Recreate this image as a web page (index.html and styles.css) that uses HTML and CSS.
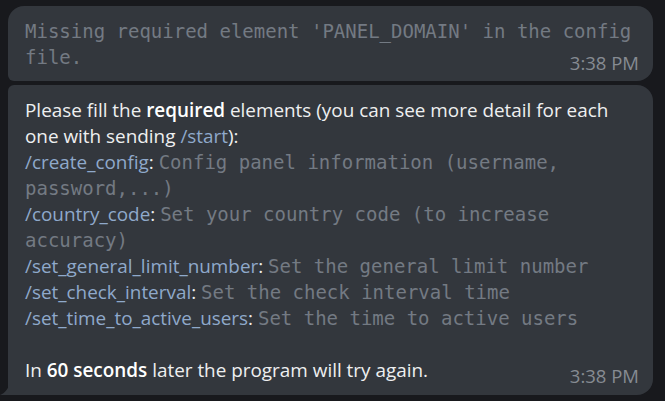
FILE: index.html
```html
<!DOCTYPE html>
<html>
<head>
<meta charset="utf-8">
<link rel="stylesheet" href="styles.css">
</head>
<body>
<div class="chat">
  <div class="bubble first">
    <div class="text mono-msg">Missing required element 'PANEL_DOMAIN' in the config file.</div>
    <div class="time">3:38 PM</div>
  </div>
  <div class="bubble last">
    <div class="text">Please fill the <b>required</b> elements (you can see more detail for each one with sending <span class="cmd">/start</span>):<br><span class="cmd">/create_config</span>: <span class="mono">Config panel information (username, password,...)</span><br><span class="cmd">/country_code</span>: <span class="mono">Set your country code (to increase accuracy)</span><br><span class="cmd">/set_general_limit_number</span>: <span class="mono">Set the general limit number</span><br><span class="cmd">/set_check_interval</span>: <span class="mono">Set the check interval time</span><br><span class="cmd">/set_time_to_active_users</span>: <span class="mono">Set the time to active users</span><br><br>In <b>60 seconds</b> later the program will try again.</div>
    <div class="time">3:38 PM</div>
    <svg class="tail" width="10" height="12" viewBox="0 0 10 12"><path d="M10 0 V12 H0 C5 10 8 6 10 0 Z" fill="#33373d"/></svg>
  </div>
</div>
</body>
</html>
```
FILE: styles.css
```css
html, body {
  margin: 0;
  padding: 0;
  background: #18191d;
}
.chat {
  display: flex;
  flex-direction: column;
  gap: 4px;
  padding: 6px 12px 6px 8px;
}
.bubble {
  position: relative;
  display: grid;
  background: #33373d;
  padding: 12px 20px 11px 17px;
  border-radius: 16px;
}
.bubble.first {
  border-bottom-left-radius: 6px;
}
.bubble.last {
  border-top-left-radius: 6px;
  border-bottom-left-radius: 0;
  padding-bottom: 12px;
}
.text, .time {
  grid-area: 1 / 1;
}
.text {
  font-family: "Open Sans", sans-serif;
  font-size: 18.9px;
  line-height: 26px;
  color: #eeeff0;
}
.text b {
  font-weight: 600;
  color: #ffffff;
}
.mono-msg, .mono {
  font-family: "DejaVu Sans Mono", monospace;
  font-size: 19px;
  color: #737a83;
}
.mono {
  line-height: 1;
}
.cmd {
  color: #8fa9cb;
}
.time {
  justify-self: end;
  align-self: end;
  margin-right: -6px;
  margin-bottom: -4px;
  font-family: "Open Sans", sans-serif;
  font-size: 18.5px;
  line-height: 22px;
  color: #868b92;
}
.tail {
  position: absolute;
  left: -8px;
  bottom: 0;
}
```
